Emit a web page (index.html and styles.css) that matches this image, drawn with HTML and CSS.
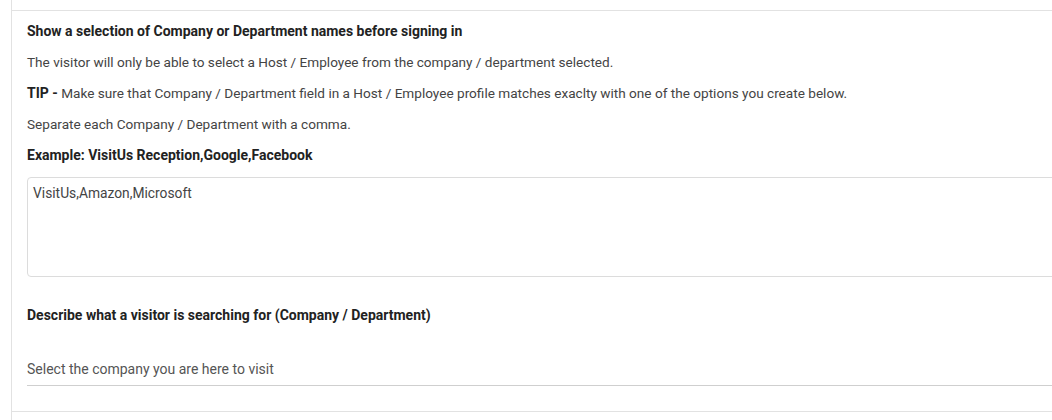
FILE: index.html
```html
<!DOCTYPE html>
<html>
<head>
    <title>Company selection settings</title>
    <link rel="stylesheet" href="styles.css">
</head>
<body>
    <div class="panel">
        <div class="section">
            <p class="title">Show a selection of Company or Department names before signing in</p>
            <p>The visitor will only be able to select a Host / Employee from the company / department selected.</p>
            <p><strong>TIP -</strong> Make sure that Company / Department field in a Host / Employee profile matches exaclty with one of the options you create below.</p>
            <p>Separate each Company / Department with a comma.</p>
            <p class="title">Example: VisitUs Reception,Google,Facebook</p>

            <textarea class="companies">VisitUs,Amazon,Microsoft</textarea>

            <p class="title search-label">Describe what a visitor is searching for (Company / Department)</p>

            <input type="text" class="search-text" value="Select the company you are here to visit">
        </div>
    </div>
</body>
</html>
```

FILE: styles.css
```css
html, body { margin: 0; padding: 0; background: #fff; overflow: hidden; }
body { font-family: Roboto, "Liberation Sans", Arial, sans-serif; font-size: 13.6px; color: #444; }
.panel { margin-left: 11px; width: 1100px; height: 420px; border-left: 1px solid #e2e2e2; padding-top: 10px; box-sizing: border-box; }
.section { border-top: 1px solid #e2e2e2; border-bottom: 1px solid #e2e2e2; padding: 11px 0 25px 15px; }
.section p { margin: 0 0 13px; line-height: 18px; }
.section p.title { font-size: 14px; font-weight: bold; color: #222; }
strong { font-size: 14px; line-height: 1; font-weight: bold; color: #222; }
.companies { display: block; width: 1080px; height: 100px; box-sizing: border-box; margin: 9px 0 0; padding: 7px 5px; border: 1px solid #dcdcdc; border-radius: 4px; font-family: inherit; font-size: 13.8px; color: #444; resize: none; }
.section p.search-label { margin: 29px 0 0; }
.search-text { display: block; width: 1080px; box-sizing: border-box; margin-top: 37px; padding: 0 0 8px; border: none; border-bottom: 1px solid #cfcfcf; font-family: inherit; font-size: 14px; color: #555; outline: none; }
```
